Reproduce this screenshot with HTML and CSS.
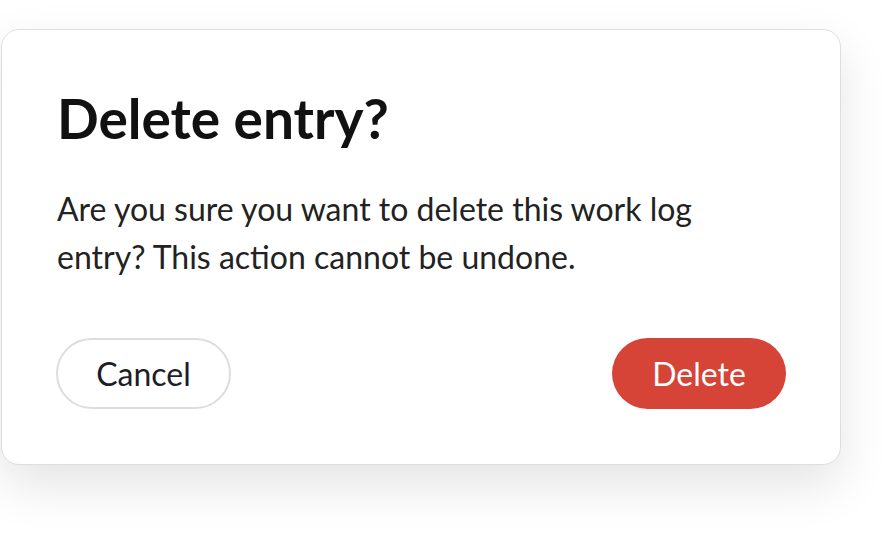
FILE: index.html
```html
<!DOCTYPE html>
<html lang="en">
<head>
<meta charset="utf-8">
<title>Delete entry?</title>
<link rel="stylesheet" href="styles.css">
</head>
<body>
<div class="stage">
  <div class="dialog" role="dialog" aria-labelledby="dlg-title">
    <h1 class="dialog-title" id="dlg-title">Delete entry?</h1>
    <p class="dialog-text">Are you sure you want to delete this work log entry? This action cannot be undone.</p>
    <div class="dialog-actions">
      <button class="btn btn-cancel" type="button">Cancel</button>
      <button class="btn btn-delete" type="button">Delete</button>
    </div>
  </div>
</div>
</body>
</html>
```
FILE: styles.css
```css
* { box-sizing: border-box; }
html, body { margin: 0; padding: 0; background: #ffffff; }
body { font-family: Lato, "Noto Sans", sans-serif; min-height: 100vh; }
.stage {
  min-height: 534px;
  padding: 29px 0 0 1px;
}
.dialog {
  width: 840px;
  height: 436px;
  background: #ffffff;
  border: 1px solid #dedede;
  border-radius: 18px;
  box-shadow: 0 20px 50px rgba(0, 0, 0, 0.11);
  padding: 55px 54px 55px 54px;
  display: flex;
  flex-direction: column;
}
.dialog-title {
  margin: 0 0 0 1px;
  font-size: 55px;
  line-height: 1.2;
  font-weight: 700;
  color: #111111;
}
.dialog-text {
  margin: 34px 0 0 1px;
  max-width: 690px;
  font-size: 32px;
  line-height: 48px;
  color: #222222;
}
.dialog-actions {
  margin-top: auto;
  display: flex;
  justify-content: space-between;
  align-items: center;
}
.btn {
  font-family: Lato, "Noto Sans", sans-serif;
  font-size: 32px;
  height: 71px;
  border-radius: 36px;
  cursor: pointer;
}
.btn-cancel {
  width: 175px;
  background: #ffffff;
  border: 2px solid #dddddd;
  color: #1d1c2a;
}
.btn-delete {
  width: 174px;
  background: #d64337;
  border: none;
  color: #ffffff;
}
```
